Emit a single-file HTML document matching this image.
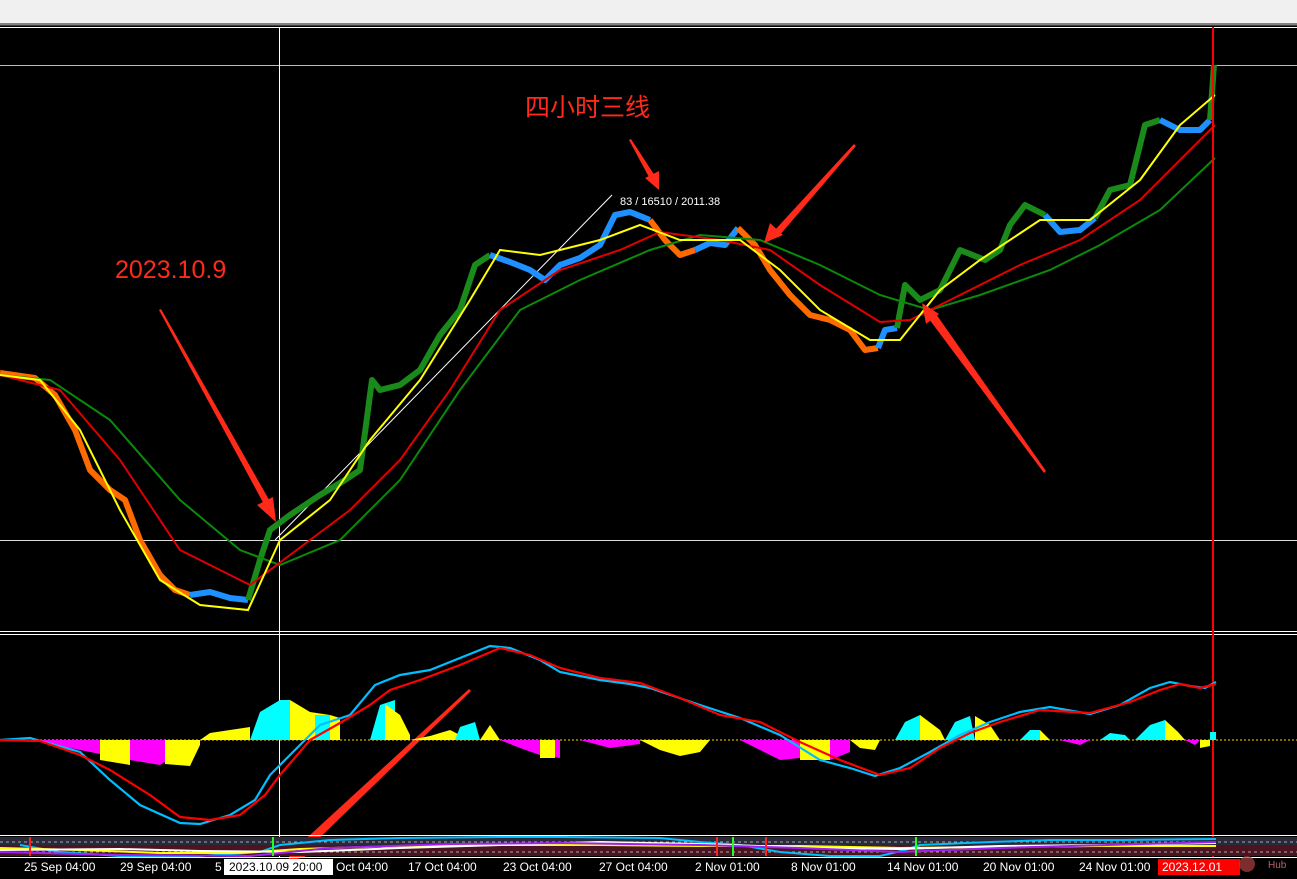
<!DOCTYPE html>
<html><head><meta charset="utf-8"><style>
html,body{margin:0;padding:0;background:#000;width:1297px;height:879px;overflow:hidden}
svg{display:block}
</style></head><body>
<svg width="1297" height="879" viewBox="0 0 1297 879" xmlns="http://www.w3.org/2000/svg" font-family="Liberation Sans, sans-serif">
<rect x="0" y="0" width="1297" height="879" fill="#000"/>
<rect x="0" y="0" width="1297" height="23" fill="#f0f0f0"/>
<rect x="0" y="23" width="1297" height="2" fill="#808080"/>
<rect x="0" y="25" width="1297" height="1" fill="#404040"/>
<rect x="0" y="27" width="1297" height="1" fill="#fff"/>
<rect x="0" y="65" width="1297" height="1" fill="#bbb"/>
<rect x="0" y="540" width="1297" height="1" fill="#ddd"/>
<rect x="279" y="27" width="1" height="830" fill="#fff"/>
<rect x="0" y="631" width="1297" height="1" fill="#fff"/>
<rect x="0" y="634" width="1297" height="1" fill="#fff"/>
<line x1="275" y1="540" x2="612" y2="195" stroke="#fff"/>
<g fill="none" stroke-width="6" stroke-linejoin="round">
<polyline stroke="#ff6a00" points="0,373 35,378 55,395 75,430 90,470 110,490 125,500 140,540 160,575 175,590 190,595"/>
<polyline stroke="#1e90ff" points="190,595 210,592 230,598 248,600"/>
<polyline stroke="#1a8a1a" points="248,600 260,560 270,530 290,515 320,495 345,480 360,470 372,380 380,390 400,385 420,370 440,335 460,310 475,265 490,255"/>
<polyline stroke="#1e90ff" points="490,255 510,262 530,270 545,280 560,265 580,258 600,245 615,215 630,212 650,220"/>
<polyline stroke="#ff6a00" points="650,220 665,240 680,255 695,250"/>
<polyline stroke="#1e90ff" points="695,250 710,243 725,245 738,228"/>
<polyline stroke="#ff6a00" points="738,228 755,245 770,270 790,295 810,315 830,320 850,330 865,350 878,348"/>
<polyline stroke="#1e90ff" points="878,348 885,330 897,328"/>
<polyline stroke="#1a8a1a" points="897,328 905,285 920,300 940,290 960,250 985,260 1000,250 1010,225 1025,205 1045,215"/>
<polyline stroke="#1e90ff" points="1045,215 1060,232 1080,230 1095,218"/>
<polyline stroke="#1a8a1a" points="1095,218 1110,190 1130,185 1145,125 1160,120"/>
<polyline stroke="#1e90ff" points="1160,120 1180,130 1200,130 1210,120"/>
<polyline stroke="#1a8a1a" points="1210,120 1214,65"/>
</g>
<g fill="none" stroke-width="2">
<polyline stroke="#0a8a0a" points="0,375 50,380 110,420 180,500 240,550 280,565 340,540 400,480 460,390 520,310 580,280 650,250 700,235 760,240 820,265 880,295 930,310 980,295 1050,270 1100,245 1160,210 1215,158"/>
<polyline stroke="#e00000" points="0,375 60,390 120,460 180,550 250,585 290,555 350,510 400,460 450,390 500,310 560,270 620,250 660,232 720,240 770,250 820,285 880,322 910,320 960,295 1020,265 1080,240 1140,200 1190,150 1215,125"/>
<polyline stroke="#ffff00" points="0,375 40,380 80,430 120,510 160,580 200,605 248,610 280,540 330,500 370,440 420,380 470,300 500,250 540,255 600,240 640,225 680,240 740,240 780,270 820,310 870,340 900,340 940,290 980,260 1040,220 1090,220 1140,180 1180,125 1215,95"/>
</g>
<rect x="1212" y="27" width="2" height="830" fill="#ff0000"/>
<text x="115" y="278" font-size="25" fill="#ff2a1a">2023.10.9</text>
<text x="525" y="116" font-size="25" fill="#ff2a1a" font-family="Liberation Sans, Noto Sans CJK SC, sans-serif">四小时三线</text>
<text x="620" y="205" font-size="11" fill="#fff">83 / 16510 / 2011.38</text>
<g fill="#ff2a1a">
<polygon points="159,310 161,309 272,505 266,508"/><polygon points="276,522 257,505 273,497"/>
<polygon points="629,140 631,139 655,176 650,179"/><polygon points="659,190 645,178 659,171"/>
<polygon points="854,144 856,146 779,236 774,231"/><polygon points="764,243 770,223 783,235"/>
<polygon points="1044,473 1046,471 936,314 929,319"/><polygon points="922,303 939,314 926,324"/>
<polygon points="469,689 471,691 305,852 298,846"/><polygon points="288,862 293,840 310,855"/>
</g>
<line x1="0" y1="740" x2="1297" y2="740" stroke="#ffd700" stroke-dasharray="2,2"/>
<g>
<polygon fill="#ff00ff" points="30,740 90,752 130,760 160,765 160,740"/>
<polygon fill="#ffff00" points="100,740 100,760 130,765 130,740"/>
<polygon fill="#ff00ff" points="130,740 130,752 150,760 160,765 165,762 165,740"/>
<polygon fill="#ffff00" points="165,740 165,764 190,766 200,745 200,740"/>
<polygon fill="#ffff00" points="200,740 210,733 230,730 250,727 250,740"/>
<polygon fill="#00ffff" points="250,740 260,712 280,700 290,700 290,740"/>
<polygon fill="#ffff00" points="290,740 290,700 310,712 330,715 340,718 340,740"/>
<polygon fill="#00ffff" points="315,740 315,715 330,715 330,740"/>
<polygon fill="#00ffff" points="370,740 380,705 395,700 395,740"/>
<polygon fill="#ffff00" points="385,740 385,704 400,715 410,735 410,740"/>
<polygon fill="#ffff00" points="410,740 430,736 450,730 460,735 470,740"/>
<polygon fill="#00ffff" points="455,740 460,727 475,722 480,740"/>
<polygon fill="#ffff00" points="480,740 490,725 500,740"/>
<polygon fill="#ff00ff" points="500,740 520,748 540,755 560,758 560,740"/>
<polygon fill="#ffff00" points="540,740 540,758 555,758 555,740"/>
<polygon fill="#ff00ff" points="580,740 610,748 640,744 640,740"/>
<polygon fill="#ffff00" points="640,740 660,750 680,756 700,752 710,740"/>
<polygon fill="#ff00ff" points="740,740 760,750 780,760 800,758 830,760 850,752 850,740"/>
<polygon fill="#ffff00" points="800,740 800,760 830,760 830,740"/>
<polygon fill="#ffff00" points="850,740 860,748 875,750 880,740"/>
<polygon fill="#00ffff" points="895,740 905,722 920,715 930,725 935,740"/>
<polygon fill="#ffff00" points="920,740 920,715 940,730 945,740"/>
<polygon fill="#00ffff" points="945,740 955,722 970,716 975,740"/>
<polygon fill="#ffff00" points="975,740 975,716 990,725 1000,740"/>
<polygon fill="#00ffff" points="1020,740 1030,730 1040,730 1040,740"/>
<polygon fill="#ffff00" points="1040,740 1040,730 1050,740"/>
<polygon fill="#ff00ff" points="1060,740 1080,745 1090,740"/>
<polygon fill="#00ffff" points="1100,740 1110,733 1125,735 1130,740"/>
<polygon fill="#00ffff" points="1135,740 1150,725 1165,720 1165,740"/>
<polygon fill="#ffff00" points="1165,740 1165,720 1178,732 1185,740"/>
<polygon fill="#ff00ff" points="1185,740 1195,745 1200,740"/>
<polygon fill="#ffff00" points="1200,740 1200,748 1210,746 1210,740"/>
<polygon fill="#00ffff" points="1210,740 1210,732 1216,732 1216,740"/>
</g>
<g fill="none" stroke-width="2.2">
<polyline stroke="#00bfff" points="0,740 30,738 80,752 110,780 140,805 180,823 200,824 230,815 255,800 270,775 290,755 320,725 350,715 375,685 400,675 430,670 460,658 490,646 510,648 540,660 560,672 600,680 630,684 650,688 700,705 740,718 780,735 820,760 850,768 875,776 900,768 930,752 960,735 990,722 1020,712 1050,707 1090,714 1120,705 1150,688 1170,682 1190,686 1205,688 1216,682"/>
<polyline stroke="#ff0000" points="0,740 40,741 80,755 110,770 150,795 180,817 210,820 240,815 265,795 280,775 310,740 340,723 370,705 390,690 420,680 460,665 500,648 530,655 560,668 600,678 640,683 680,698 720,715 760,722 800,742 840,760 880,775 910,768 940,748 970,733 1000,722 1040,710 1090,713 1130,702 1160,690 1180,684 1200,688 1216,684"/>
</g>
<rect x="0" y="835" width="1297" height="1" fill="#fff"/>
<rect x="0" y="837" width="1297" height="19" fill="#2a2a3a"/>
<rect x="0" y="845" width="1297" height="11" fill="#4a1420"/>
<line x1="0" y1="842" x2="1297" y2="842" stroke="#aaa" stroke-dasharray="3,3"/>
<line x1="0" y1="852" x2="1297" y2="852" stroke="#aaa" stroke-dasharray="3,3"/>
<g fill="none" stroke-width="2">
<polyline stroke="#00bfff" points="20,845 60,852 120,856 200,856 260,852 280,845 330,840 400,838 500,837 560,837 660,838 700,842 740,845 780,852 830,856 880,856 905,850 920,845 990,842 1050,840 1120,840 1216,839"/>
<polyline stroke="#ffff00" points="0,848 80,850 160,853 240,853 300,849 400,846 500,845 600,845 700,846 800,846 900,848 1000,847 1100,846 1216,846"/>
<polyline stroke="#fff" points="0,850 120,849 200,851 300,852 400,848 500,845 600,842 700,844 820,848 900,849 1000,846 1100,845 1216,843"/>
<polyline stroke="#a020f0" points="0,852 120,855 250,856 330,848 450,844 560,843 700,845 800,848 900,852 1000,848 1216,842"/>
</g>
<rect x="29" y="837" width="2" height="19" fill="#ff2020"/>
<rect x="272" y="837" width="2" height="19" fill="#20ff20"/>
<rect x="732" y="837" width="2" height="19" fill="#20ff20"/>
<rect x="716" y="837" width="2" height="19" fill="#ff2020"/>
<rect x="765" y="837" width="2" height="19" fill="#ff2020"/>
<rect x="915" y="837" width="2" height="19" fill="#20ff20"/>
<rect x="0" y="857" width="1297" height="1" fill="#fff"/>
<g font-size="12" fill="#fff">
<text x="24" y="871">25 Sep 04:00</text>
<text x="120" y="871">29 Sep 04:00</text>
<text x="215" y="871">5</text>
<text x="336" y="871">Oct 04:00</text>
<text x="408" y="871">17 Oct 04:00</text>
<text x="503" y="871">23 Oct 04:00</text>
<text x="599" y="871">27 Oct 04:00</text>
<text x="695" y="871">2 Nov 01:00</text>
<text x="791" y="871">8 Nov 01:00</text>
<text x="887" y="871">14 Nov 01:00</text>
<text x="983" y="871">20 Nov 01:00</text>
<text x="1079" y="871">24 Nov 01:00</text>
</g>
<rect x="224" y="859" width="109" height="16" fill="#fff"/>
<text x="229" y="871" font-size="12" fill="#000">2023.10.09 20:00</text>
<rect x="1158" y="859" width="82" height="16" fill="#ff0000"/>
<text x="1162" y="871" font-size="12" fill="#fff">2023.12.01</text>
<text x="1268" y="868" font-size="10" fill="#c06060">Hub</text>
<circle cx="1247" cy="864" r="8" fill="#b04040" opacity="0.7"/>
</svg>
</body></html>
